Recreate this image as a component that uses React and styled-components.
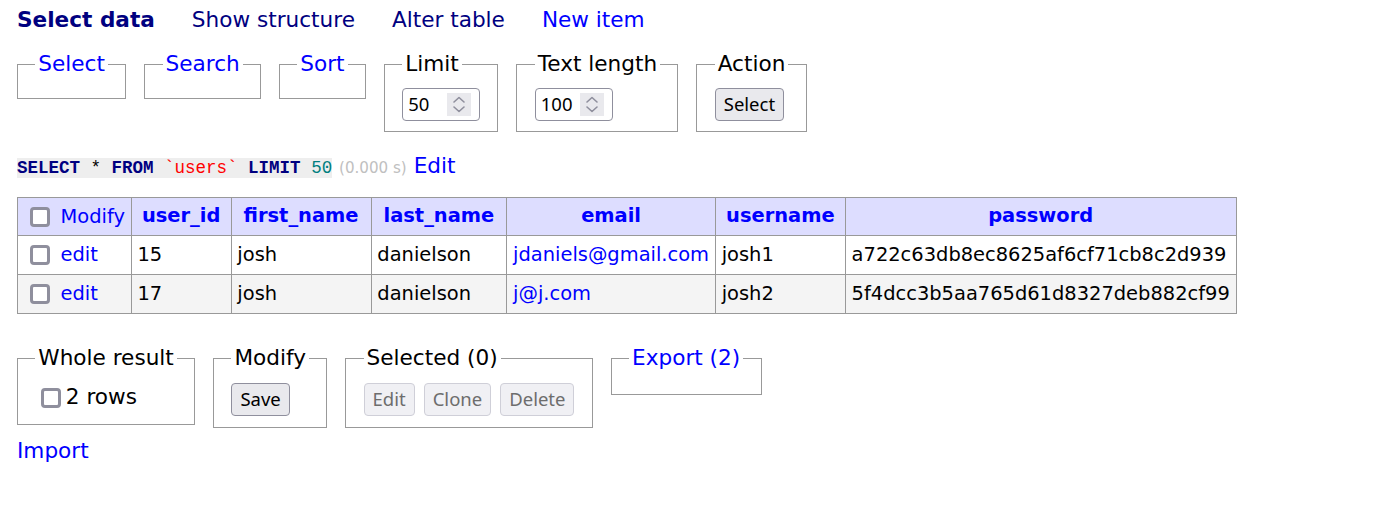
import React from 'react';
import styled, {createGlobalStyle} from 'styled-components';

const GlobalStyle = createGlobalStyle`
  body {
    margin: 0;
    background: #fff;
    color: #000;
    font: 21.6px/1.25 "DejaVu Sans", Verdana, sans-serif;
  }
  a {
    color: blue;
    text-decoration: none;
  }
`;

const Page = styled.div`
  padding: 7px 20px 20px 17px;
`;

const Links = styled.nav`
  display: flex;
  gap: 37px;
`;

const MenuLink = styled.a`
  color: ${p => (p.$visited ? 'navy' : 'blue')};
  font-weight: ${p => (p.$active ? 'bold' : 'normal')};
  white-space: nowrap;
`;

const FieldsetRow = styled.div`
  display: flex;
  align-items: flex-start;
  gap: 18px;
  margin-top: ${p => p.$top || '17.3px'};
`;

const Fieldset = styled.fieldset`
  margin: 0;
  padding: ${p => p.$pad || '9.8px'} 17.3px;
  border: 1px solid #999;
  min-width: 0;
`;

const Legend = styled.legend`
  padding: 0 3px;
`;

const NumberBox = styled.div`
  display: flex;
  align-items: center;
  justify-content: space-between;
  box-sizing: border-box;
  width: 78px;
  height: 33px;
  padding: 0 8px 0 5px;
  border: 1px solid #8f8f9d;
  border-radius: 4px;
  font: 18.5px/1 "Noto Sans", sans-serif;
`;

const Spinner = styled.span`
  display: block;
  width: 24px;
  height: 23px;
  background: #e9e9ed;
`;

const Button = styled.button`
  box-sizing: border-box;
  height: 33px;
  padding: 0 8px;
  border: 1px solid #8f8f9d;
  border-radius: 4px;
  background: #e9e9ed;
  color: #000;
  font: 18.5px/1 "Noto Sans", sans-serif;
  vertical-align: middle;

  &:disabled {
    background: #f0f0f4;
    border-color: #cfcfd8;
    color: #6d6d6d;
  }
`;

const ButtonRow = styled.div`
  display: flex;
  gap: 9px;
`;

const Check = styled.span`
  display: inline-block;
  box-sizing: border-box;
  width: 20px;
  height: 20px;
  margin: 5px 4.5px 5px 6px;
  border: 3px solid #8f8f9d;
  border-radius: 4px;
  background: #fff;
  vertical-align: middle;
`;

const Query = styled.p`
  margin: 21px 0 0;
`;

const Code = styled.code`
  background: #eee;
  font: 17.5px "Liberation Mono", monospace;
`;

const Kw = styled.b`
  color: navy;
`;

const Bac = styled.span`
  color: red;
`;

const Num = styled.span`
  color: #007f7f;
`;

const Time = styled.span`
  color: silver;
  font-size: 70%;
`;

const Table = styled.table`
  margin: 16.8px 0 0;
  border-collapse: collapse;
  font-size: 19.44px;
  line-height: 1.25;
`;

const Head = styled.thead`
  background: #ddf;
`;

const Th = styled.th`
  border: 1px solid #999;
  padding: 4.9px ${p => (p.$wide ? '12px' : '10.2px')};
  text-align: center;
  white-space: nowrap;
`;

const Td = styled.td`
  border: 1px solid #999;
  padding: 3.9px 5.8px;
  white-space: nowrap;
`;

const Row = styled.tr`
  background: ${p => (p.$odd ? '#f4f4f4' : '#fff')};
`;

const Footer = styled.div`
  margin-top: 31px;
  padding-bottom: 10.8px;
`;

const Label = styled.label`
  display: block;
  white-space: nowrap;
`;

const Chevrons = () => (
  <svg width="24" height="23" viewBox="0 0 24 23" fill="none" stroke="#8f8f9d" strokeWidth="1.6" strokeLinecap="round" strokeLinejoin="round">
    <path d="M7 9 L12 4.5 L17 9"/>
    <path d="M7 14 L12 18.5 L17 14"/>
  </svg>
);

const NumberInput = ({value}) => (
  <NumberBox>
    <span>{value}</span>
    <Spinner><Chevrons/></Spinner>
  </NumberBox>
);

const rows = [
  {id: 15, first: 'josh', last: 'danielson', email: 'jdaniels@gmail.com', user: 'josh1', pass: 'a722c63db8ec8625af6cf71cb8c2d939'},
  {id: 17, first: 'josh', last: 'danielson', email: 'j@j.com', user: 'josh2', pass: '5f4dcc3b5aa765d61d8327deb882cf99'},
];

const columns = [
  {name: 'user_id'},
  {name: 'first_name', wide: true},
  {name: 'last_name', wide: true},
  {name: 'email'},
  {name: 'username'},
  {name: 'password'},
];

const App = () => {
  return (
    <>
      <GlobalStyle/>
      <Page>
        <Links>
          <MenuLink $active $visited>Select data</MenuLink>
          <MenuLink $visited>Show structure</MenuLink>
          <MenuLink $visited>Alter table</MenuLink>
          <MenuLink>New item</MenuLink>
        </Links>

        <FieldsetRow>
          <Fieldset><Legend><a>Select</a></Legend></Fieldset>
          <Fieldset><Legend><a>Search</a></Legend></Fieldset>
          <Fieldset><Legend><a>Sort</a></Legend></Fieldset>
          <Fieldset>
            <Legend>Limit</Legend>
            <NumberInput value="50"/>
          </Fieldset>
          <Fieldset>
            <Legend>Text length</Legend>
            <NumberInput value="100"/>
          </Fieldset>
          <Fieldset>
            <Legend>Action</Legend>
            <Button>Select</Button>
          </Fieldset>
        </FieldsetRow>

        <Query>
          <Code><Kw>SELECT</Kw> * <Kw>FROM</Kw> <Bac>`users`</Bac> <Kw>LIMIT</Kw> <Num>50</Num></Code>{' '}
          <Time>(0.000 s)</Time> <a>Edit</a>
        </Query>

        <Table>
          <Head>
            <tr>
              <Td><Check/> <a>Modify</a></Td>
              {columns.map(c => <Th key={c.name} $wide={c.wide}><a>{c.name}</a></Th>)}
            </tr>
          </Head>
          <tbody>
            {rows.map((r, i) => (
              <Row key={r.id} $odd={i % 2 === 1}>
                <Td><Check/> <a>edit</a></Td>
                <Td>{r.id}</Td>
                <Td>{r.first}</Td>
                <Td>{r.last}</Td>
                <Td><a>{r.email}</a></Td>
                <Td>{r.user}</Td>
                <Td>{r.pass}</Td>
              </Row>
            ))}
          </tbody>
        </Table>

        <Footer>
          <FieldsetRow $top="0">
            <Fieldset $pad="10.8px">
              <Legend>Whole result</Legend>
              <Label><Check/>2 rows</Label>
            </Fieldset>
            <Fieldset $pad="10.8px">
              <Legend>Modify</Legend>
              <Button>Save</Button>
            </Fieldset>
            <Fieldset $pad="10.8px">
              <Legend>Selected (0)</Legend>
              <ButtonRow>
                <Button disabled>Edit</Button>
                <Button disabled>Clone</Button>
                <Button disabled>Delete</Button>
              </ButtonRow>
            </Fieldset>
            <Fieldset $pad="10.8px"><Legend><a>Export (2)</a></Legend></Fieldset>
          </FieldsetRow>
        </Footer>
        <div><a>Import</a></div>
      </Page>
    </>
  );
};

export default App;
